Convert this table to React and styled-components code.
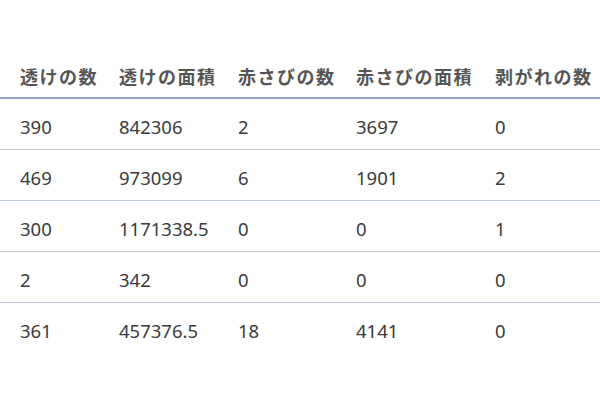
import React from 'react'
import styled, { createGlobalStyle } from 'styled-components'

const GlobalStyle = createGlobalStyle`
  body {
    margin: 0;
    background: #fff;
    font-family: "Noto Sans", "Noto Sans CJK JP", sans-serif;
  }
`;

const Page = styled.div`
  padding-top: 55px;
`;

const Grid = styled.div`
  display: grid;
  grid-template-columns: 99px 119px 118px 139px 1fr;
`;

const Row = styled.div`
  display: contents;
`;

const HeadCell = styled.div`
  height: 42px;
  line-height: 42px;
  padding-left: 20px;
  white-space: nowrap;
  font-family: "Noto Sans CJK JP", sans-serif;
  font-size: 18px;
  font-weight: 600;
  letter-spacing: 1.5px;
  color: #555;
  border-bottom: 2px solid #8ea4bf;
`;

const Cell = styled.div`
  height: ${(p) => (p.last ? '48px' : '47px')};
  padding-top: 3px;
  line-height: 50px;
  padding-left: 20px;
  white-space: nowrap;
  font-size: 18.5px;
  color: #3a3a3a;
  border-bottom: ${(p) => (p.last ? 'none' : '1.5px solid #bccad9')};
`;

const headers = ['透けの数', '透けの面積', '赤さびの数', '赤さびの面積', '剥がれの数'];

const rows = [
  ['390', '842306', '2', '3697', '0'],
  ['469', '973099', '6', '1901', '2'],
  ['300', '1171338.5', '0', '0', '1'],
  ['2', '342', '0', '0', '0'],
  ['361', '457376.5', '18', '4141', '0'],
];

export default function App() {
  return (
    <Page>
      <GlobalStyle />
      <Grid>
        <Row>
          {headers.map((h) => (
            <HeadCell key={h}>{h}</HeadCell>
          ))}
        </Row>
        {rows.map((r, i) => (
          <Row key={i}>
            {r.map((v, j) => (
              <Cell key={j} last={i === rows.length - 1}>{v}</Cell>
            ))}
          </Row>
        ))}
      </Grid>
    </Page>
  )
}
